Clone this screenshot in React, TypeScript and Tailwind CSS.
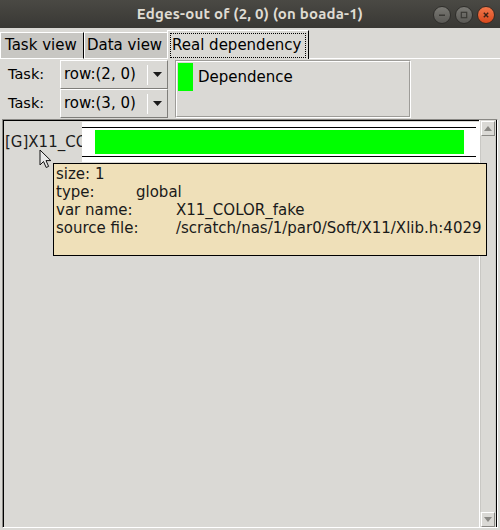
import React from "react";

function TitleButton({ kind }: { kind: "min" | "max" | "close" }) {
  const isClose = kind === "close";
  return (
    <div
      className={
        "w-[18px] h-[18px] rounded-full flex items-center justify-center border " +
        (isClose
          ? "bg-gradient-to-b from-[#f2774a] to-[#d9471a] border-[#3a2a22]"
          : "bg-gradient-to-b from-[#7a7974] to-[#5a5955] border-[#2f2e2b]")
      }
    >
      <svg width="10" height="10" viewBox="0 0 10 10">
        {kind === "min" && <rect x="2" y="4.5" width="6" height="1.5" fill="#3a3935" />}
        {kind === "max" && (
          <rect x="2.3" y="2.3" width="5.4" height="5.4" fill="none" stroke="#3a3935" strokeWidth="1.2" />
        )}
        {kind === "close" && (
          <path d="M2.8 2.8 L7.2 7.2 M7.2 2.8 L2.8 7.2" stroke="#3a2217" strokeWidth="1.4" />
        )}
      </svg>
    </div>
  );
}

function TitleBar() {
  return (
    <div className="h-[28px] shrink-0 grid grid-cols-[1fr_auto_1fr] items-center bg-gradient-to-b from-[#4a4944] to-[#393834]">
      <div />
      <div className="text-[#dfdbd2] font-bold text-[15px] font-['Ubuntu','Noto_Sans',sans-serif] tracking-[0.2px]">
        Edges-out of (2, 0) (on boada-1)
      </div>
      <div className="flex justify-end gap-[4px] pr-[5px] pt-[2px]">
        <TitleButton kind="min" />
        <TitleButton kind="max" />
        <TitleButton kind="close" />
      </div>
    </div>
  );
}

function Tabs() {
  return (
    <div className="h-[31px] shrink-0 flex items-end text-[15px]">
      <div className="w-[84px] h-[27px] bg-[#c8c7c3] border-t border-l border-white border-r border-r-black border-b border-b-white flex items-center pl-[4px] text-black whitespace-nowrap">
        Task view
      </div>
      <div className="w-[83px] h-[27px] bg-[#c8c7c3] border-t border-l border-white border-b flex items-center pl-[2px] text-black whitespace-nowrap">
        Data view
      </div>
      <div className="w-[142px] h-[29px] border-t border-l border-white border-r border-r-black p-[2px] pb-[1px]">
        <div className="w-full h-full border border-dotted border-black flex items-center pl-[1px] text-black whitespace-nowrap">
          Real dependency
        </div>
      </div>
      <div className="flex-1 h-px bg-white" />
    </div>
  );
}

function Combo({ value }: { value: string }) {
  return (
    <div className="w-[108px] h-full border-t border-l border-white border-r border-b border-r-[#7f7e7a] border-b-[#7f7e7a] flex items-center">
      <div className="flex-1 pl-[3px] text-[15px] whitespace-nowrap">{value}</div>
      <div className="w-px h-[20px] bg-white" />
      <div className="w-[19px] flex items-center justify-center">
        <svg width="9" height="5" viewBox="0 0 9 5">
          <path d="M0 0 L9 0 L4.5 5 Z" fill="#1a1a1a" />
        </svg>
      </div>
    </div>
  );
}

function Controls() {
  return (
    <div className="h-[60px] shrink-0 flex pt-[1px]">
      <div className="flex flex-col">
        <div className="h-[29px] flex items-center">
          <div className="w-[60px] pl-[8px] text-[14.5px]">Task:</div>
          <Combo value="row:(2, 0)" />
        </div>
        <div className="h-[29px] flex items-center">
          <div className="w-[60px] pl-[8px] text-[14.5px]">Task:</div>
          <Combo value="row:(3, 0)" />
        </div>
      </div>
      <div className="ml-[7px] w-[236px] h-[58px] border-t border-l border-[#9d9c98] border-r border-b border-r-white border-b-white">
        <div className="w-full h-full border-t border-l border-white border-r border-b border-r-[#9d9c98] border-b-[#9d9c98] flex items-start pl-px pt-px">
          <div className="w-[15px] h-[28px] bg-[#00ff00]" />
          <div className="ml-[5px] h-[28px] flex items-center text-[15px]">Dependence</div>
        </div>
      </div>
    </div>
  );
}

function Scrollbar() {
  return (
    <div className="w-[18px] flex flex-col border-l border-white border-r border-r-black pt-px">
      <div className="h-[15px] mx-px border border-white border-r-[#8a8985] border-b-[#8a8985] flex items-center justify-center">
        <svg width="8" height="5" viewBox="0 0 8 5">
          <path d="M0 5 L8 5 L4 0 Z" fill="#8a8985" />
        </svg>
      </div>
      <div className="flex-1 border-l border-r border-[#c9c8c4]" />
      <div className="h-[15px] mx-px border border-white border-r-[#8a8985] border-b-[#8a8985] flex items-center justify-center">
        <svg width="8" height="5" viewBox="0 0 8 5">
          <path d="M0 0 L8 0 L4 5 Z" fill="#8a8985" />
        </svg>
      </div>
    </div>
  );
}

function Main() {
  return (
    <div className="flex-1 mx-[2px] mb-[2px] border-t border-l border-[#8a8985] border-r border-b border-r-white border-b-white flex">
      <div className="flex-1 border-t border-l border-black flex flex-col pt-px">
        <div className="flex items-center h-[40px]">
          <div className="w-[78px] pl-px overflow-hidden whitespace-nowrap text-[15px] text-[#1c1c1c]">
            [G]X11_COLOR_fake
          </div>
          <div className="flex-1 h-full bg-white flex flex-col">
            <div className="h-[5px]" />
            <div className="h-px bg-black w-[394px]" />
            <div className="h-[2px]" />
            <div className="h-[24px] ml-[13px] w-[369px] bg-[#00ff00]" />
            <div className="h-[2px]" />
            <div className="h-px bg-black w-[394px]" />
          </div>
        </div>
      </div>
      <Scrollbar />
    </div>
  );
}

function Tooltip() {
  return (
    <div className="absolute left-[53px] top-[163px] w-[434px] h-[93px] bg-[#efe0b9] border border-black px-[2px] pt-px text-[15px] leading-[18px] text-[#1a1a1a]">
      <div>size: 1</div>
      <div className="flex">
        <span className="w-[80px] shrink-0">type:</span>
        <span>global</span>
      </div>
      <div className="flex">
        <span className="w-[120px] shrink-0">var name:</span>
        <span>X11_COLOR_fake</span>
      </div>
      <div className="flex">
        <span className="w-[120px] shrink-0">source file:</span>
        <span className="whitespace-nowrap">/scratch/nas/1/par0/Soft/X11/Xlib.h:4029</span>
      </div>
    </div>
  );
}

function Cursor() {
  return (
    <svg className="absolute left-[39px] top-[149px]" width="14" height="20" viewBox="0 0 14 20">
      <path
        d="M1 1 L1 16 L4.5 12.5 L7.2 18.5 L9.6 17.4 L7 11.6 L11.8 11.6 Z"
        fill="#e8e8e8"
        stroke="#111"
        strokeWidth="1"
        strokeLinejoin="round"
      />
    </svg>
  );
}

export default function App() {
  return (
    <div className="w-[500px] h-[530px] bg-[#dad9d5] flex flex-col relative overflow-hidden font-['DejaVu_Sans',sans-serif] text-black">
      <TitleBar />
      <Tabs />
      <Controls />
      <Main />
      <Tooltip />
      <Cursor />
    </div>
  );
}
